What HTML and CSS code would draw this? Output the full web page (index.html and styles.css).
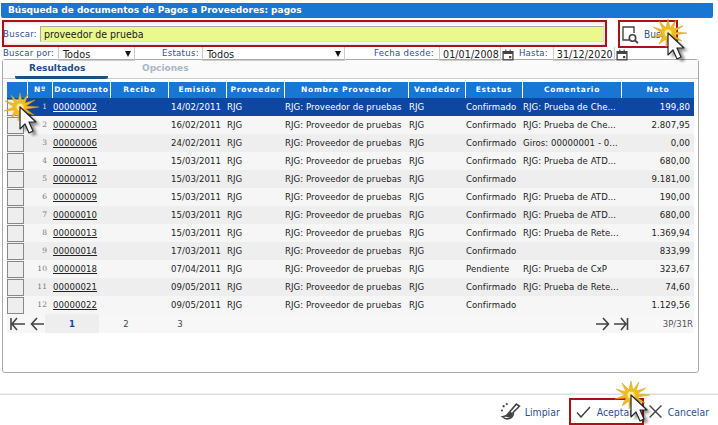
FILE: index.html
```html
<!DOCTYPE html>
<html lang="es">
<head>
<meta charset="utf-8">
<title>Búsqueda de documentos</title>
<link rel="stylesheet" href="styles.css">
</head>
<body>
<svg width="0" height="0" class="defs">
  <defs>
    <filter id="soft" x="-30%" y="-30%" width="160%" height="160%"><feGaussianBlur stdDeviation="1.5"/></filter>
    <g id="burst">
      <path d="M0-14 2-5 8-13 5-4 15-7 6-1 19 0 6 2 14 8 4 5 7 13 1 6-2 14-2 6-9 11-5 3-16 4-6 0-15-6-5-3-9-12-2-5Z" fill="#f2bd1d" stroke="#d29a12" stroke-width=".5"/>
      <circle r="3.500" fill="#fbeb9c"/>
    </g>
    <g id="pointer">
      <path d="M0 0V22L5 17 9 26 13 24 9 15H16Z" fill="#000" opacity=".45" filter="url(#soft)" transform="translate(4 3)"/>
      <path d="M0 0V22L5 17 9 26 13 24 9 15H16Z" fill="#fff" stroke="#222" stroke-width="1.2" stroke-linejoin="round"/>
    </g>
  </defs>
</svg>
<header class="title">Búsqueda de documentos de Pagos a Proveedores: pagos</header>
<section class="search">
  <div class="search-box">
    <label class="lbl lbl-search">Buscar:</label>
    <div class="search-input">proveedor de prueba</div>
  </div>
  <div class="search-btn">
    <svg width="18" height="19" viewBox="0 0 18 19" fill="none" stroke="#444" stroke-width="1.4"><path d="M8 15H2V2H13V8"/><circle cx="11.500" cy="13" r="3.200" stroke-width="1.600"/><path d="M14 15.500 17 18" stroke-width="1.800"/></svg>
    <span>Buscar</span>
  </div>
</section>
<section class="filters">
  <span class="lbl">Buscar por:</span>
  <div class="select sel-a"><span>Todos</span><i></i></div>
  <span class="lbl lbl-est">Estatus:</span>
  <div class="select sel-b"><span>Todos</span><i></i></div>
  <span class="lbl lbl-desde">Fecha desde:</span>
  <div class="date">01/01/2008</div>
  <svg class="cal" width="12" height="12" viewBox="0 0 11 11"><path d="M1 2.500H10V10H1Z" fill="none" stroke="#444" stroke-width="1.200"/><path d="M1 2H10V4.500H1ZM3 .5H4V2H3ZM7 .5H8V2H7ZM6.500 6.500H8.500V8.500H6.500Z" fill="#444"/></svg>
  <span class="lbl lbl-hasta">Hasta:</span>
  <div class="date">31/12/2020</div>
  <svg class="cal" width="12" height="12" viewBox="0 0 11 11"><path d="M1 2.500H10V10H1Z" fill="none" stroke="#444" stroke-width="1.200"/><path d="M1 2H10V4.500H1ZM3 .5H4V2H3ZM7 .5H8V2H7ZM6.500 6.500H8.500V8.500H6.500Z" fill="#444"/></svg>
</section>
<main class="panel">
  <nav class="tabs">
    <div class="tab active">Resultados</div>
    <div class="tab">Opciones</div>
  </nav>
  <table class="grid">
    <colgroup>
      <col class="c0"><col class="c1"><col class="c2"><col class="c3"><col class="c4"><col class="c5"><col class="c6"><col class="c7"><col class="c8"><col class="c9"><col class="c10">
    </colgroup>
    <thead>
      <tr><th></th><th>Nº</th><th>Documento</th><th>Recibo</th><th>Emisión</th><th>Proveedor</th><th>Nombre Proveedor</th><th>Vendedor</th><th>Estatus</th><th>Comentario</th><th>Neto</th></tr>
    </thead>
    <tbody>
      <tr class="sel"><td><b class="chk"></b></td><td class="n">1</td><td><a>00000002</a></td><td></td><td class="d">14/02/2011</td><td>RJG</td><td>RJG: Proveedor de pruebas</td><td>RJG</td><td>Confirmado</td><td>RJG: Prueba de Che...</td><td class="r">199,80</td></tr>
      <tr><td><b class="chk"></b></td><td class="n">2</td><td><a>00000003</a></td><td></td><td class="d">16/02/2011</td><td>RJG</td><td>RJG: Proveedor de pruebas</td><td>RJG</td><td>Confirmado</td><td>RJG: Prueba de Che...</td><td class="r">2.807,95</td></tr>
      <tr><td><b class="chk"></b></td><td class="n">3</td><td><a>00000006</a></td><td></td><td class="d">24/02/2011</td><td>RJG</td><td>RJG: Proveedor de pruebas</td><td>RJG</td><td>Confirmado</td><td>Giros: 00000001 - 0...</td><td class="r">0,00</td></tr>
      <tr><td><b class="chk"></b></td><td class="n">4</td><td><a>00000011</a></td><td></td><td class="d">15/03/2011</td><td>RJG</td><td>RJG: Proveedor de pruebas</td><td>RJG</td><td>Confirmado</td><td>RJG: Prueba de ATD...</td><td class="r">680,00</td></tr>
      <tr><td><b class="chk"></b></td><td class="n">5</td><td><a>00000012</a></td><td></td><td class="d">15/03/2011</td><td>RJG</td><td>RJG: Proveedor de pruebas</td><td>RJG</td><td>Confirmado</td><td></td><td class="r">9.181,00</td></tr>
      <tr><td><b class="chk"></b></td><td class="n">6</td><td><a>00000009</a></td><td></td><td class="d">15/03/2011</td><td>RJG</td><td>RJG: Proveedor de pruebas</td><td>RJG</td><td>Confirmado</td><td>RJG: Prueba de ATD...</td><td class="r">190,00</td></tr>
      <tr><td><b class="chk"></b></td><td class="n">7</td><td><a>00000010</a></td><td></td><td class="d">15/03/2011</td><td>RJG</td><td>RJG: Proveedor de pruebas</td><td>RJG</td><td>Confirmado</td><td>RJG: Prueba de ATD...</td><td class="r">680,00</td></tr>
      <tr><td><b class="chk"></b></td><td class="n">8</td><td><a>00000013</a></td><td></td><td class="d">15/03/2011</td><td>RJG</td><td>RJG: Proveedor de pruebas</td><td>RJG</td><td>Confirmado</td><td>RJG: Prueba de Rete...</td><td class="r">1.369,94</td></tr>
      <tr><td><b class="chk"></b></td><td class="n">9</td><td><a>00000014</a></td><td></td><td class="d">17/03/2011</td><td>RJG</td><td>RJG: Proveedor de pruebas</td><td>RJG</td><td>Confirmado</td><td></td><td class="r">833,99</td></tr>
      <tr><td><b class="chk"></b></td><td class="n">10</td><td><a>00000018</a></td><td></td><td class="d">07/04/2011</td><td>RJG</td><td>RJG: Proveedor de pruebas</td><td>RJG</td><td>Pendiente</td><td>RJG: Prueba de CxP</td><td class="r">323,67</td></tr>
      <tr><td><b class="chk"></b></td><td class="n">11</td><td><a>00000021</a></td><td></td><td class="d">09/05/2011</td><td>RJG</td><td>RJG: Proveedor de pruebas</td><td>RJG</td><td>Confirmado</td><td>RJG: Prueba de Rete...</td><td class="r">74,60</td></tr>
      <tr><td><b class="chk"></b></td><td class="n">12</td><td><a>00000022</a></td><td></td><td class="d">09/05/2011</td><td>RJG</td><td>RJG: Proveedor de pruebas</td><td>RJG</td><td>Confirmado</td><td></td><td class="r">1.129,56</td></tr>
    </tbody>
  </table>
  <div class="pager">
    <div class="arrows">
      <svg width="18" height="14" viewBox="0 0 18 14" fill="none" stroke="#444" stroke-width="1.600"><path d="M2 1V13M8 1 3 7 8 13M3 7H16"/></svg>
      <svg width="15" height="14" viewBox="0 0 15 14" fill="none" stroke="#444" stroke-width="1.600"><path d="M7 1 1.500 7 7 13M1.500 7H14"/></svg>
    </div>
    <div class="pg on">1</div><div class="pg">2</div><div class="pg">3</div>
    <div class="arrows right">
      <svg width="15" height="14" viewBox="0 0 15 14" fill="none" stroke="#444" stroke-width="1.600"><path d="M8 1 13.500 7 8 13M13.500 7H1"/></svg>
      <svg width="16" height="14" viewBox="0 0 16 14" fill="none" stroke="#444" stroke-width="1.600"><path d="M14.500 1V13M8 1 13 7 8 13M13 7H1"/></svg>
    </div>
    <div class="count">3P/31R</div>
  </div>
</main>
<footer class="foot">
  <div class="act act-clean">
    <svg width="22" height="19" viewBox="0 0 20 18"><path d="M9 9 15 2 18 4 12 10C13 13 10 16 6 16 4 16 3 15 2 14 5 14 7 12 9 9Z" fill="none" stroke="#444" stroke-width="1.500"/><path d="M9 9 12 11 10 15 5 14Z" fill="#444"/><circle cx="3" cy="4" r="1.100" fill="#444"/><circle cx="6" cy="2" r="1" fill="#444"/><circle cx="1.500" cy="8" r="1" fill="#444"/></svg>
    <span>Limpiar</span>
  </div>
  <div class="act act-ok">
    <svg width="15" height="12" viewBox="0 0 15 12" fill="none" stroke="#444" stroke-width="1.500"><path d="M1 6.500 5 11 14 1"/></svg>
    <span>Aceptar</span>
  </div>
  <div class="act act-no">
    <svg width="13" height="13" viewBox="0 0 12 12" fill="none" stroke="#444" stroke-width="1.300"><path d="M.5.500 11.500 11.500M11.500.500 .5 11.500"/></svg>
    <span>Cancelar</span>
  </div>
</footer>
<svg class="fx fx1" width="50" height="50" viewBox="-25 -20 50 50"><use href="#burst"/><use href="#pointer"/></svg>
<svg class="fx fx2" width="50" height="50" viewBox="-25 -20 50 50"><use href="#burst"/><use href="#pointer"/></svg>
<svg class="fx fx3" width="50" height="50" viewBox="-25 -20 50 50"><use href="#burst"/><use href="#pointer"/></svg>
</body>
</html>
```
FILE: styles.css
```css
* { box-sizing: border-box; }
html, body { margin: 0; padding: 0; }
body {
  width: 718px; height: 425px; overflow: hidden; position: relative; background: #fff;
  font-family: "DejaVu Sans Condensed", "DejaVu Sans", sans-serif;
  font-size: 9.500px; color: #222; padding-top: 3px;
}
.defs { position: absolute; }
.title {
  height: 15px; margin: 0 1px; width: 712px; background: #1976d2; color: #fff;
  font: bold 9px/14px "DejaVu Sans", sans-serif; padding-left: 7px; border-radius: 0 0 2px 2px;
}
.lbl { color: #2f4f8f; font-size: 9.500px; letter-spacing: .2px; }
.lbl-search { margin-left: -1px; letter-spacing: .3px; }
.search { display: flex; height: 28px; margin-top: 2px; padding-left: 2px; }
.search-box {
  width: 605px; height: 27px; border: 2px solid #b00f14; display: flex; align-items: center; gap: 3px; padding: 0 1px 0 0;
  box-shadow: inset 0 0 4px #ccc;
}
.search-input {
  flex: 1; height: 16px; background: #ebf98c; border: 1px solid #aaa; border-right-color: #ddd; border-bottom-color: #ddd;
  font-size: 10.500px; line-height: 14px; padding-left: 3px; color: #222;
}
.search-btn {
  margin-left: 11px; width: 60px; height: 28px; border: 2px solid #b00f14; display: flex; align-items: center; gap: 5px; padding-left: 1px; color: #2f4f8f; font-size: 10px;
  overflow: hidden;
}
.filters { display: flex; align-items: flex-start; height: 13px; margin-top: -1px; padding-left: 3px; }
.select {
  height: 14px; border: 1px solid #ccc; border-top: 0; display: flex; justify-content: space-between; align-items: center; padding: 1px 3px 0 4px; font-size: 10.800px;
}
.select i { width: 0; height: 0; border: 3.500px solid transparent; border-top: 6px solid #111; border-bottom: 0; }
.sel-a { width: 77px; margin-left: 4px; }
.sel-b { width: 143px; }
.lbl-est { margin-left: 27px; margin-right: 3px; letter-spacing: .3px; }
.lbl-desde { margin-left: 29px; margin-right: 5px; letter-spacing: .3px; }
.lbl-hasta { margin-left: 5px; margin-right: 5px; }
.date { width: 62px; height: 14px; border: 1px solid #ccc; border-top: 0; padding: 1px 0 0 3px; font-size: 10.600px; letter-spacing: .1px; }
.cal { margin: 2px 0 0 1px; }
.panel {
  margin: -1px 0 0 2px; width: 697px; height: 314px; border: 1px solid #aaa; border-radius: 3px;
}
.tabs { display: flex; height: 19px; background: #fafafa; border-bottom: 1px solid #ccc; padding-left: 12px; margin-bottom: 3px; }
.tab { font: bold 9px/16px "DejaVu Sans", sans-serif; color: #a9b6c9; }
.tab.active { color: #1d4f8a; border-bottom: 3px solid #1d4f8a; height: 19px; width: 93px; padding-left: 14px; margin-right: 34px; border-radius: 0 0 2px 2px; }
.grid { border-collapse: separate; border-spacing: 0; table-layout: fixed; width: 687px; margin-left: 4px; }
.c0 { width: 20px; } .c1 { width: 25px; } .c2, .c3, .c4, .c5 { width: 58px; } .c6 { width: 124px; }
.c7 { width: 57px; } .c8 { width: 57px; } .c9 { width: 99px; } .c10 { width: 73px; }
.grid th {
  height: 15px; padding: 0; background: #1976d2; color: #fff; font: bold 7.500px/16px "DejaVu Sans", sans-serif; letter-spacing: .7px; border-left: 1px solid #fff; white-space: nowrap; overflow: hidden;
}
.grid th:first-child { border-left: 0; }
.grid td { height: 18px; padding: 0 0 1px 1px; white-space: nowrap; overflow: hidden; color: #222; letter-spacing: .07px; }
.grid tbody tr:nth-child(odd) td { background: #eeeeee; }
.grid tbody tr:nth-child(even) td { background: #f6f6f6; }
.grid tbody tr.sel td { background: #0d47a1; color: #fff; }
.grid td:first-child { padding: 0; }
.grid td.n { text-align: right; font-size: 7.500px; color: #777; font-family: "DejaVu Serif", serif; padding-right: 5px; }
.grid tr.sel td.n { color: #ddd; }
.grid a { text-decoration: underline; color: inherit; }
.grid td.d { padding-left: 3px; }
.grid td.r { text-align: right; padding-right: 4px; }
.chk { display: block; width: 17px; height: 17px; border: 1px solid #888; background: #eee; }
.sel .chk { background: #f0f0f0; }
.pager { display: flex; margin-left: 4px; width: 687px; height: 19px; background: #f7f7f7; align-items: center; }
.arrows { display: flex; width: 38px; gap: 3px; padding-left: 2px; align-items: center; }
.arrows.right { margin-left: 386px; width: 40px; }
.pg { width: 54px; height: 19px; line-height: 19px; text-align: center; color: #444; }
.pg.on { background: #eeeeee; color: #0d47a1; font-weight: bold; }
.count { flex: 1; text-align: right; font-size: 9.500px; padding-right: 1px; color: #555; }
.foot {
  margin-top: 21px; height: 31px; border-top: 1px solid #ddd; box-shadow: 0 -1px 0 #eee; display: flex; justify-content: flex-end; padding: 3px 9px 0 0; color: #2f4f8f; font-size: 10.400px;
}
.act { display: flex; align-items: center; gap: 6px; height: 27px; }
.act-clean { margin-right: 9px; gap: 3px; }
.act-ok { width: 75px; border: 2px solid #b00f14; padding-left: 5px; margin-right: 5px; }
.fx { position: absolute; pointer-events: none; }
.fx1 { left: -5px; top: 87px; }
.fx2 { left: 643px; top: 13px; }
.fx3 { left: 606px; top: 375px; }
```
